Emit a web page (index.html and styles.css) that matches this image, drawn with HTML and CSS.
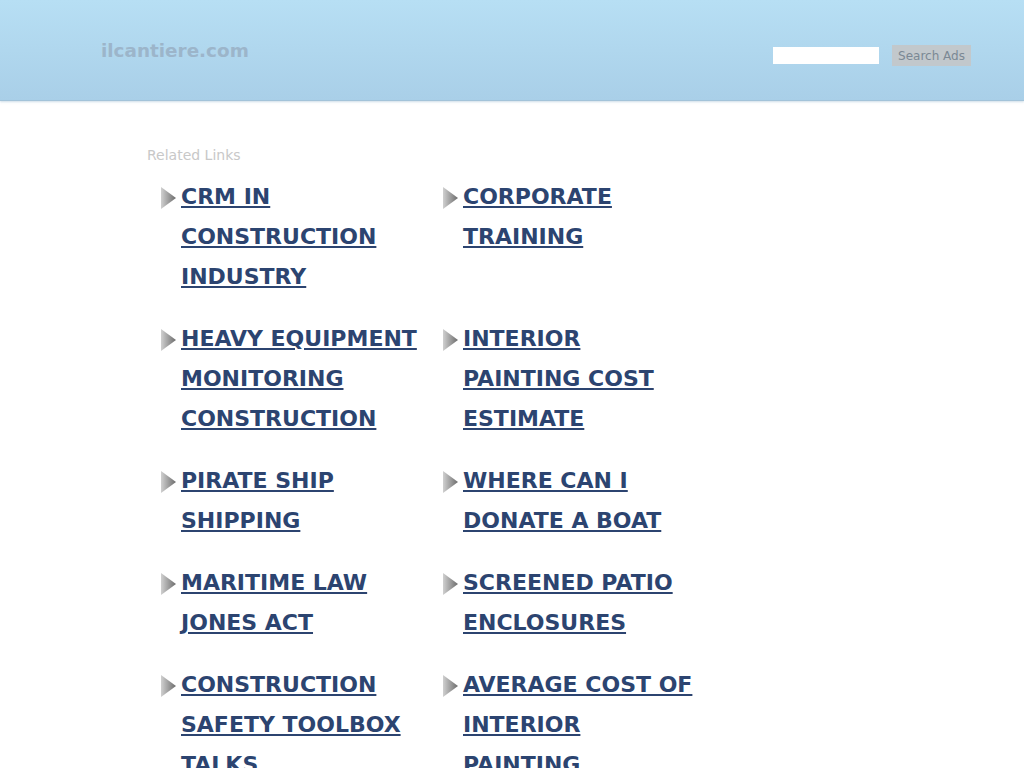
FILE: index.html
```html
<!DOCTYPE html>
<html>
<head>
<meta charset="utf-8">
<link rel="stylesheet" href="styles.css">
</head>
<body>
<div class="header">
  <div class="logo">ilcantiere.com</div>
  <form class="search">
    <input class="search-input" type="text">
    <button class="search-btn" type="button">Search Ads</button>
  </form>
</div>
<div class="content">
  <div class="related">Related Links</div>
  <div class="links">
    <div class="item"><span class="arrow"></span><a href="#">CRM IN CONSTRUCTION INDUSTRY</a></div>
    <div class="item"><span class="arrow"></span><a href="#">CORPORATE TRAINING</a></div>
    <div class="item"><span class="arrow"></span><a href="#">HEAVY EQUIPMENT MONITORING CONSTRUCTION</a></div>
    <div class="item"><span class="arrow"></span><a href="#">INTERIOR PAINTING COST ESTIMATE</a></div>
    <div class="item"><span class="arrow"></span><a href="#">PIRATE SHIP SHIPPING</a></div>
    <div class="item"><span class="arrow"></span><a href="#">WHERE CAN I DONATE A BOAT</a></div>
    <div class="item"><span class="arrow"></span><a href="#">MARITIME LAW JONES ACT</a></div>
    <div class="item"><span class="arrow"></span><a href="#">SCREENED PATIO ENCLOSURES</a></div>
    <div class="item"><span class="arrow"></span><a href="#">CONSTRUCTION SAFETY TOOLBOX TALKS</a></div>
    <div class="item"><span class="arrow"></span><a href="#">AVERAGE COST OF INTERIOR PAINTING</a></div>
  </div>
</div>
</body>
</html>
```
FILE: styles.css
```css
html, body {
  margin: 0;
  padding: 0;
  background: #fff;
  font-family: "DejaVu Sans", sans-serif;
  overflow: hidden;
  height: 768px;
}
.header {
  height: 100px;
  background: linear-gradient(to bottom, #b7dff4 0%, #a9cfe8 100%);
  border-bottom: 1px solid #a3c3d9;
  box-shadow: 0 1px 2px rgba(160, 190, 210, 0.5);
  display: flex;
  justify-content: space-between;
  align-items: flex-start;
}
.logo {
  margin-left: 101px;
  margin-top: 40px;
  font-size: 18.4px;
  line-height: 22px;
  font-weight: bold;
  color: #9cb5ca;
}
.search {
  display: flex;
  align-items: center;
  margin: 45px 53px 0 0;
}
.search-input {
  width: 106px;
  height: 17px;
  border: none;
  padding: 0;
  margin: 0 13px 0 0;
  background: #fff;
}
.search-btn {
  width: 79px;
  height: 21px;
  border: none;
  padding: 0;
  background: #c2c8cc;
  color: #7b8894;
  font-family: "DejaVu Sans", sans-serif;
  font-size: 12px;
}
.content {
  padding: 46px 0 0 147px;
}
.related {
  font-size: 14px;
  line-height: 17px;
  color: #c8c8c8;
}
.links {
  margin: 13px 0 0 14px;
  display: grid;
  grid-template-columns: 282px 282px;
  row-gap: 22px;
  align-items: start;
}
.item {
  display: flex;
  align-items: flex-start;
}
.arrow {
  flex: none;
  width: 15px;
  height: 22px;
  margin: 10px 5px 0 0;
  background: linear-gradient(to right, #d0d0d0, #6c6c6c);
  clip-path: polygon(0 0, 100% 50%, 0 100%);
}
.item a {
  display: block;
  width: 240px;
  font-size: 22px;
  line-height: 40px;
  font-weight: bold;
  color: #2c4470;
  text-decoration: underline;
}
```
